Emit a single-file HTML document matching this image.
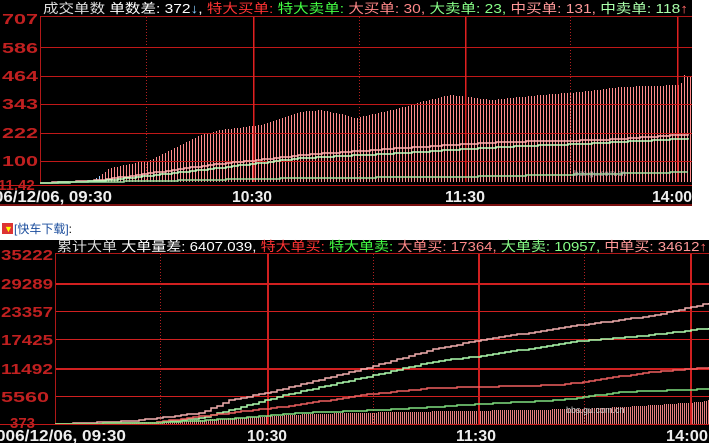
<!DOCTYPE html>
<html><head><meta charset="utf-8"><style>
html,body{margin:0;padding:0;background:#fff;width:709px;height:446px;overflow:hidden}
svg{position:absolute;left:0;top:0}
text{font-family:"Liberation Sans","Noto Sans CJK SC",sans-serif}
</style></head><body>
<svg id="s" width="709" height="446" xmlns="http://www.w3.org/2000/svg">
<rect x="0" y="0" width="692" height="206" fill="#000"/>
<rect x="0" y="240" width="709" height="206" fill="#000"/>
<rect x="0" y="443" width="709" height="3" fill="#fff"/>
<g id="top"></g>
<g id="bot"></g>
<text y="13" font-size="13" fill="#ddd" textLength="645" lengthAdjust="spacingAndGlyphs" x="43"><tspan fill="#ddd">成交单数 </tspan><tspan fill="#fff">单数差: 372</tspan><tspan fill="#8cf">↓</tspan><tspan fill="#fff">, </tspan><tspan fill="#f33">特大买单: </tspan><tspan fill="#4f4">特大卖单: </tspan><tspan fill="#f88">大买单: 30, </tspan><tspan fill="#8f8">大卖单: 23, </tspan><tspan fill="#f99">中买单: 131, </tspan><tspan fill="#afa">中卖单: 118</tspan><tspan fill="#f66">↑</tspan></text>
<g font-size="15" font-weight="bold" fill="#c02020">
<text x="2" y="24" textLength="36" lengthAdjust="spacingAndGlyphs">707</text><text x="2" y="53" textLength="36" lengthAdjust="spacingAndGlyphs">586</text><text x="2" y="81" textLength="36" lengthAdjust="spacingAndGlyphs">464</text><text x="2" y="109" textLength="36" lengthAdjust="spacingAndGlyphs">343</text><text x="2" y="138" textLength="36" lengthAdjust="spacingAndGlyphs">222</text><text x="2" y="166" textLength="36" lengthAdjust="spacingAndGlyphs">100</text><text x="-2" y="190">11.42</text>
</g>
<g font-size="16" font-weight="bold" fill="#eee">
<text x="-6" y="202" textLength="118" lengthAdjust="spacingAndGlyphs">06/12/06, 09:30</text><text x="232" y="202" textLength="40" lengthAdjust="spacingAndGlyphs">10:30</text><text x="445" y="202" textLength="40" lengthAdjust="spacingAndGlyphs">11:30</text><text x="652" y="202" textLength="40" lengthAdjust="spacingAndGlyphs">14:00</text>
</g>
<rect x="2" y="223" width="11" height="11" fill="#d33"/><text x="4" y="232" font-size="9" fill="#ff0">▼</text>
<text x="14" y="233" font-size="12" fill="#1a4c9c">[快车下载]<tspan fill="#000">:</tspan></text>
<text y="251" font-size="13" x="57" textLength="650" lengthAdjust="spacingAndGlyphs"><tspan fill="#ddd">累计大单 </tspan><tspan fill="#fff">大单量差: 6407.039, </tspan><tspan fill="#f33">特大单买: </tspan><tspan fill="#4f4">特大单卖: </tspan><tspan fill="#f88">大单买: 17364, </tspan><tspan fill="#8f8">大单卖: 10957, </tspan><tspan fill="#f99">中单买: 34612</tspan><tspan fill="#f66">↑</tspan></text>
<g font-size="15" font-weight="bold" fill="#c02020">
<text x="1" y="260" textLength="52" lengthAdjust="spacingAndGlyphs">35222</text><text x="1" y="289" textLength="52" lengthAdjust="spacingAndGlyphs">29289</text><text x="1" y="317" textLength="52" lengthAdjust="spacingAndGlyphs">23357</text><text x="1" y="345" textLength="52" lengthAdjust="spacingAndGlyphs">17425</text><text x="1" y="374" textLength="52" lengthAdjust="spacingAndGlyphs">11492</text><text x="1" y="402" textLength="48" lengthAdjust="spacingAndGlyphs">5560</text><text x="10" y="428">373</text>
</g>
<text x="566" y="413" font-size="9" fill="#ccc">bbs.gu.com.cn</text>
<text x="574" y="176" font-size="8" fill="#aaa">bbs.gu.com.cn</text>
<g font-size="16" font-weight="bold" fill="#eee">
<text x="-4" y="441" textLength="130" lengthAdjust="spacingAndGlyphs">006/12/06, 09:30</text><text x="247" y="441" textLength="40" lengthAdjust="spacingAndGlyphs">10:30</text><text x="456" y="441" textLength="40" lengthAdjust="spacingAndGlyphs">11:30</text><text x="666" y="441" textLength="42" lengthAdjust="spacingAndGlyphs">14:00</text>
</g>
</svg>
<script>
var NS="http://www.w3.org/2000/svg";
function el(g,n,a){var e=document.createElementNS(NS,n);for(var k in a)e.setAttribute(k,a[k]);g.appendChild(e);return e;}
function interp(pts,x){for(var i=0;i<pts.length-1;i++){if(x>=pts[i][0]&&x<=pts[i+1][0]){var t=(x-pts[i][0])/(pts[i+1][0]-pts[i][0]);return pts[i][1]+t*(pts[i+1][1]-pts[i][1]);}}return pts[pts.length-1][1];}
function step(g,pts,x0,x1,col,w){var d="M"+x0+" "+interp(pts,x0).toFixed(0);for(var x=x0;x<=x1;x+=6){var ny=Math.round(interp(pts,x));d+=" H"+x+" V"+ny;}el(g,"path",{d:d,stroke:col,"stroke-width":w||1,fill:"none"});}
var T=document.getElementById("top");
var tb=[[96,178],[110,168],[150,160],[170,150],[200,135],[220,130],[260,125],[300,112],[320,110],[345,115],[355,118],[400,108],[420,102],[450,95],[470,97],[490,100],[540,95],[580,92],[620,87],[680,85],[684,75],[692,78]];
for(var x=96;x<692;x+=3){var y=Math.round(interp(tb,x));el(T,"rect",{x:x,y:y,width:1,height:182-y,fill:x<100?"#9cf":"#ff8c8c"});}
el(T,"rect",{x:40,y:16,width:652,height:1,fill:"#b01818"});
[47,76,104,133,161].forEach(function(y){el(T,"rect",{x:40,y:y,width:652,height:1,fill:"#c01818"});});
el(T,"rect",{x:40,y:16,width:1,height:170,fill:"#b01818"});
[253,465,677].forEach(function(x){el(T,"rect",{x:x,y:17,width:1.5,height:168,fill:"#e02020"});});
[146,359,570].forEach(function(x){el(T,"line",{x1:x+.5,y1:17,x2:x+.5,y2:185,stroke:"#b02020","stroke-dasharray":"1,2"});});
el(T,"rect",{x:40,y:182,width:652,height:3,fill:"#000"});
step(T,[[40,183],[100,180],[200,166],[300,155],[400,148],[500,142],[600,140],[692,134]],40,692,"#ffb0b0",1.5);
step(T,[[40,183],[100,181],[200,170],[300,158],[400,153],[500,147],[600,143],[692,138]],40,692,"#c0ffc0",1.5);
step(T,[[40,183],[150,181],[300,178],[450,177],[550,175],[692,172]],40,692,"#a0e0a0",1.5);
el(T,"rect",{x:0,y:185,width:692,height:1,fill:"#c01818"});
el(T,"rect",{x:0,y:204,width:692,height:2,fill:"#7a1010"});
var B=document.getElementById("bot");
var bb=[[130,423],[200,420],[310,414],[400,412],[580,409],[640,406],[700,402],[709,400]];
for(var x=130;x<709;x+=2){var y=Math.round(interp(bb,x));el(B,"rect",{x:x,y:y,width:1,height:424-y,fill:"#e88080"});}
el(B,"rect",{x:55,y:253,width:654,height:1,fill:"#b01818"});
[283,311,339,368,396].forEach(function(y,i){el(B,"rect",{x:55,y:y,width:654,height:(i==0||i==3)?2:1,fill:"#d02020"});});
el(B,"rect",{x:55,y:253,width:1,height:172,fill:"#b01818"});
[267,478,690].forEach(function(x){el(B,"rect",{x:x,y:254,width:2,height:170,fill:"#d02020"});});
[160,373,584].forEach(function(x){el(B,"line",{x1:x+.5,y1:254,x2:x+.5,y2:424,stroke:"#b02020","stroke-dasharray":"1,2"});});
step(B,[[55,424],[130,421],[200,413],[230,400],[270,392],[370,367],[430,350],[480,340],[580,325],[650,316],[709,303]],55,709,"#f4b0b0",1.5);
step(B,[[55,424],[150,423],[200,418],[230,410],[280,396],[370,376],[430,362],[480,356],[580,341],[650,335],[709,328]],55,709,"#b0ffb0",1.5);
step(B,[[55,424],[150,423],[210,415],[280,407],[370,394],[430,388],[560,385],[650,372],[709,367]],55,709,"#f06060",1.5);
step(B,[[55,424],[150,423],[210,420],[300,413],[400,409],[480,404],[560,400],[620,392],[709,389]],55,709,"#80e080",1.5);
el(B,"rect",{x:0,y:424,width:709,height:1,fill:"#c01818"});
</script>
</body></html>
